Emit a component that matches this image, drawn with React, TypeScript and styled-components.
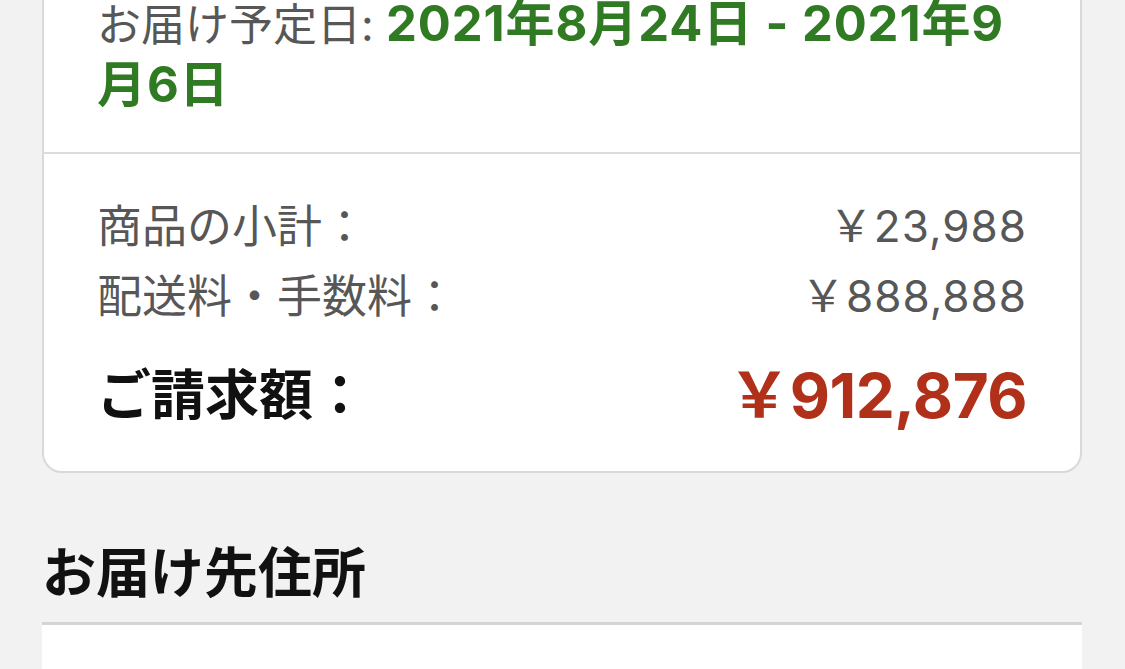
import React from "react";
import styled, { createGlobalStyle } from "styled-components";

const GlobalStyle = createGlobalStyle`
  html, body {
    margin: 0;
    padding: 0;
    background: #f2f2f2;
    overflow: hidden;
  }
  body {
    font-family: Inter, "Noto Sans CJK JP", sans-serif;
    -webkit-font-smoothing: antialiased;
  }
`;

const Page = styled.main`
  display: flex;
  flex-direction: column;
  padding: 0 43px 0 42px;
`;

const Card = styled.section`
  margin-top: -40px;
  background: #ffffff;
  border: 2px solid #d9d9d9;
  border-radius: 20px;
  overflow: hidden;
`;

const DeliverySection = styled.div`
  padding: 32px 53px 36px;
`;

const DeliveryText = styled.p`
  margin: 0;
  font-size: 44px;
  line-height: 60px;
  color: #575757;
`;

const DateRange = styled.strong`
  font-size: 49px;
  font-weight: 700;
  letter-spacing: 0.9px;
  color: #2f7a22;
`;

const SummarySection = styled.div`
  display: flex;
  flex-direction: column;
  border-top: 2px solid #dcdcdc;
  padding: 34px 53px 17px;
`;

const Row = styled.div<{ $total?: boolean }>`
  display: flex;
  justify-content: space-between;
  align-items: center;
  height: ${(p) => (p.$total ? "126px" : "70px")};
  color: ${(p) => (p.$total ? "#111111" : "#575757")};
  font-weight: ${(p) => (p.$total ? 700 : 400)};
`;

const Label = styled.span<{ $total?: boolean }>`
  font-size: ${(p) => (p.$total ? "54px" : "45px")};
`;

const Amount = styled.span<{ $total?: boolean }>`
  font-size: ${(p) => (p.$total ? "62px" : "44px")};
  letter-spacing: ${(p) => (p.$total ? "-0.5px" : "1px")};
  color: ${(p) => (p.$total ? "#b0301a" : "#575757")};
`;

const SectionTitle = styled.h2`
  margin: 66px 0 0;
  font-size: 54px;
  line-height: 70px;
  font-weight: 700;
  color: #111111;
`;

const AddressCard = styled.div`
  margin-top: 13px;
  height: 60px;
  background: #ffffff;
  border-top: 3px solid #d4d4d4;
`;

const rows = [
  { label: "商品の小計：", amount: "￥23,988" },
  { label: "配送料・手数料：", amount: "￥888,888" },
];

export default function App() {
  return (
    <>
      <GlobalStyle />
      <Page>
        <Card>
          <DeliverySection>
            <DeliveryText>
              お届け予定日: <DateRange>2021年8月24日 - 2021年9月6日</DateRange>
            </DeliveryText>
          </DeliverySection>
          <SummarySection>
            {rows.map((r) => (
              <Row key={r.label}>
                <Label>{r.label}</Label>
                <Amount>{r.amount}</Amount>
              </Row>
            ))}
            <Row $total>
              <Label $total>ご請求額：</Label>
              <Amount $total>￥912,876</Amount>
            </Row>
          </SummarySection>
        </Card>
        <SectionTitle>お届け先住所</SectionTitle>
        <AddressCard />
      </Page>
    </>
  );
}
